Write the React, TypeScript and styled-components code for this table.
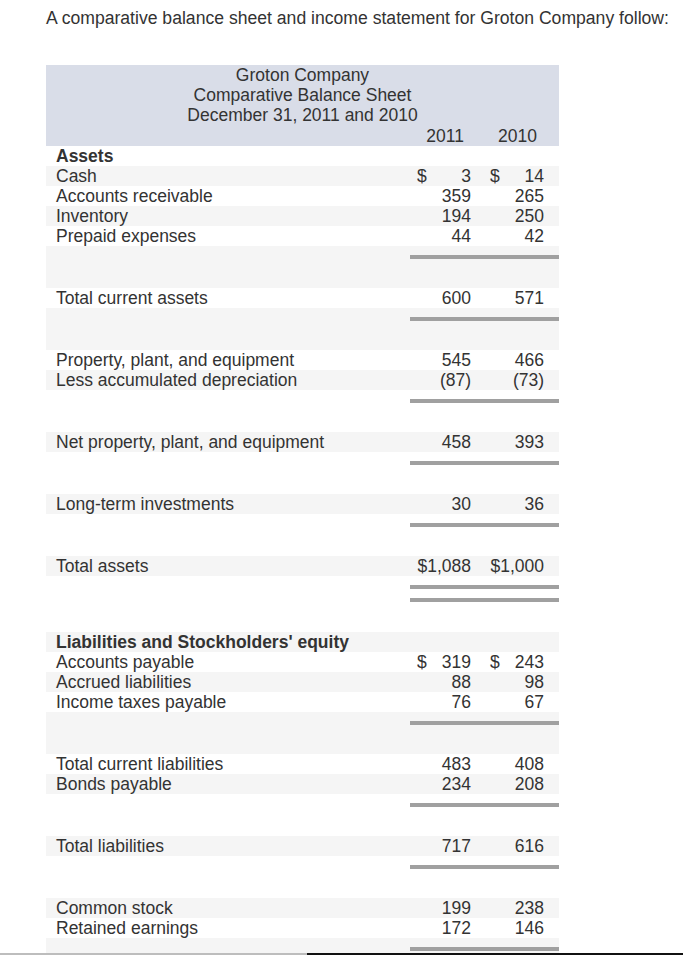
import React from 'react';
import styled, { createGlobalStyle } from 'styled-components';

const Global = createGlobalStyle`
  html, body { background: #fff; }
  body {
    margin: 8px;
    font-family: "Liberation Sans", Arial, sans-serif;
    font-size: 17.5px;
    color: #333;
  }
`;

const Intro = styled.p`
  margin: 0 0 37px 38px;
  line-height: 20px;
  white-space: nowrap;
  font-size: 17.6px;
`;

const Sheet = styled.div`
  width: 513px;
  margin-left: 38px;
`;

const Header = styled.div`
  background: #d9dde8;
  padding-bottom: 1px;
`;

const TitleLine = styled.div`
  text-align: center;
  line-height: 20px;
`;

const Grid = styled.div<{ $stripe?: boolean; $h?: number }>`
  display: grid;
  grid-template-columns: 364px 76px 73px;
  height: ${(p) => p.$h ?? 20}px;
  line-height: 20px;
  background: ${(p) => (p.$stripe ? '#f5f5f5' : 'transparent')};
`;

const YearCell = styled.div`
  text-align: right;
  padding-right: 22px;
  padding-top: 1px;
`;

const Label = styled.div<{ $bold?: boolean }>`
  padding-left: 10px;
  white-space: nowrap;
  font-weight: ${(p) => (p.$bold ? 700 : 400)};
`;

const Amount = styled.div<{ $first?: boolean }>`
  display: flex;
  justify-content: space-between;
  padding: 0 15px 0 ${(p) => (p.$first ? 7 : 4)}px;
  white-space: nowrap;
`;

const Rules = styled.div`
  grid-column: 2 / 4;
  display: flex;
  flex-direction: column;
  gap: 9px;
  padding-top: 9px;
`;

const Rule = styled.div`
  height: 4px;
  background: #a0a0a0;
`;

const BottomEdge = styled.div`
  position: fixed;
  left: 0;
  right: 0;
  bottom: 0;
  height: 2px;
  display: grid;
  grid-template-columns: 307px 1fr;
`;

const EdgePart = styled.div<{ $dark?: boolean }>`
  background: ${(p) => (p.$dark ? '#111' : '#bdbdbd')};
`;

type Row =
  | { kind: 'section'; label: string }
  | { kind: 'item'; label: string; a: string; b: string; dollar?: boolean }
  | { kind: 'rule'; double?: boolean };

const rows: Row[] = [
  { kind: 'section', label: 'Assets' },
  { kind: 'item', label: 'Cash', a: '3', b: '14', dollar: true },
  { kind: 'item', label: 'Accounts receivable', a: '359', b: '265' },
  { kind: 'item', label: 'Inventory', a: '194', b: '250' },
  { kind: 'item', label: 'Prepaid expenses', a: '44', b: '42' },
  { kind: 'rule' },
  { kind: 'item', label: 'Total current assets', a: '600', b: '571' },
  { kind: 'rule' },
  { kind: 'item', label: 'Property, plant, and equipment', a: '545', b: '466' },
  { kind: 'item', label: 'Less accumulated depreciation', a: '(87)', b: '(73)' },
  { kind: 'rule' },
  { kind: 'item', label: 'Net property, plant, and equipment', a: '458', b: '393' },
  { kind: 'rule' },
  { kind: 'item', label: 'Long-term investments', a: '30', b: '36' },
  { kind: 'rule' },
  { kind: 'item', label: 'Total assets', a: '$1,088', b: '$1,000' },
  { kind: 'rule', double: true },
  { kind: 'section', label: "Liabilities and Stockholders' equity" },
  { kind: 'item', label: 'Accounts payable', a: '319', b: '243', dollar: true },
  { kind: 'item', label: 'Accrued liabilities', a: '88', b: '98' },
  { kind: 'item', label: 'Income taxes payable', a: '76', b: '67' },
  { kind: 'rule' },
  { kind: 'item', label: 'Total current liabilities', a: '483', b: '408' },
  { kind: 'item', label: 'Bonds payable', a: '234', b: '208' },
  { kind: 'rule' },
  { kind: 'item', label: 'Total liabilities', a: '717', b: '616' },
  { kind: 'rule' },
  { kind: 'item', label: 'Common stock', a: '199', b: '238' },
  { kind: 'item', label: 'Retained earnings', a: '172', b: '146' },
  { kind: 'rule' },
];

export default function App() {
  return (
    <>
      <Global />
      <Intro>A comparative balance sheet and income statement for Groton Company follow:</Intro>
      <Sheet>
        <Header>
          <TitleLine>Groton Company</TitleLine>
          <TitleLine>Comparative Balance Sheet</TitleLine>
          <TitleLine>December 31, 2011 and 2010</TitleLine>
          <Grid>
            <div />
            <YearCell>2011</YearCell>
            <YearCell>2010</YearCell>
          </Grid>
        </Header>
        {rows.map((r, i) => {
          const stripe = i % 2 === 1;
          if (r.kind === 'section') {
            return (
              <Grid key={i} $stripe={stripe}>
                <Label $bold>{r.label}</Label>
              </Grid>
            );
          }
          if (r.kind === 'rule') {
            return (
              <Grid key={i} $stripe={stripe} $h={r.double ? 56 : 42}>
                <Rules>
                  <Rule />
                  {r.double && <Rule />}
                </Rules>
              </Grid>
            );
          }
          return (
            <Grid key={i} $stripe={stripe}>
              <Label>{r.label}</Label>
              <Amount $first>
                <span>{r.dollar ? '$' : ''}</span>
                <span>{r.a}</span>
              </Amount>
              <Amount>
                <span>{r.dollar ? '$' : ''}</span>
                <span>{r.b}</span>
              </Amount>
            </Grid>
          );
        })}
      </Sheet>
      <BottomEdge>
        <EdgePart />
        <EdgePart $dark />
      </BottomEdge>
    </>
  );
}
